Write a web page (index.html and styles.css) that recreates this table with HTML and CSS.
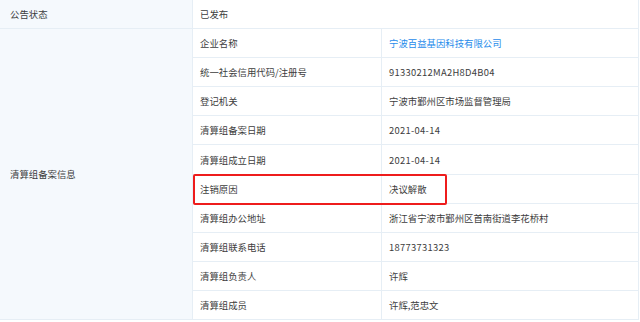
FILE: index.html
```html
<!DOCTYPE html>
<html lang="zh-CN">
<head>
<meta charset="utf-8">
<link rel="stylesheet" href="styles.css">
</head>
<body>
<div class="table">
  <div class="cell head">公告状态</div>
  <div class="cell span2">已发布</div>
  <div class="cell head tall">清算组备案信息</div>
  <div class="cell">企业名称</div>
  <div class="cell"><span class="link">宁波百益基因科技有限公司</span></div>
  <div class="cell">统一社会信用代码/注册号</div>
  <div class="cell"><span class="num">91330212MA2H8D4B04</span></div>
  <div class="cell">登记机关</div>
  <div class="cell">宁波市鄞州区市场监督管理局</div>
  <div class="cell">清算组备案日期</div>
  <div class="cell"><span class="num">2021-04-14</span></div>
  <div class="cell">清算组成立日期</div>
  <div class="cell"><span class="num">2021-04-14</span></div>
  <div class="cell">注销原因</div>
  <div class="cell">决议解散</div>
  <div class="cell">清算组办公地址</div>
  <div class="cell">浙江省宁波市鄞州区首南街道李花桥村</div>
  <div class="cell">清算组联系电话</div>
  <div class="cell"><span class="num">18773731323</span></div>
  <div class="cell">清算组负责人</div>
  <div class="cell">许辉</div>
  <div class="cell">清算组成员</div>
  <div class="cell">许辉,范忠文</div>
  <div class="highlight"></div>
</div>
</body>
</html>
```
FILE: styles.css
```css
html, body {
  margin: 0;
  padding: 0;
  background: #ffffff;
}
.table {
  position: relative;
  display: grid;
  grid-template-columns: 192px 188px 256px;
  grid-auto-rows: 28.1px;
  gap: 1px;
  background: #e6eef5;
  padding: 0 1px 1px 0;
  width: 638px;
  font-family: "Noto Sans CJK SC", "Microsoft YaHei", sans-serif;
  font-size: 9.4px;
  color: #3d3d3d;
}
.cell {
  background: #ffffff;
  display: flex;
  align-items: center;
  padding: 0 7px;
  white-space: nowrap;
}
.head {
  background: #f5f9fd;
  padding-left: 10px;
}
.span2 {
  grid-column: 2 / 4;
}
.tall {
  grid-row: 2 / 12;
}
.link {
  color: #1f8ceb;
}
.num {
  letter-spacing: 0.3px;
}
.highlight {
  position: absolute;
  left: 193px;
  top: 174px;
  width: 250px;
  height: 27px;
  border: 2px solid #ee1c1c;
  border-radius: 2px;
}
```
